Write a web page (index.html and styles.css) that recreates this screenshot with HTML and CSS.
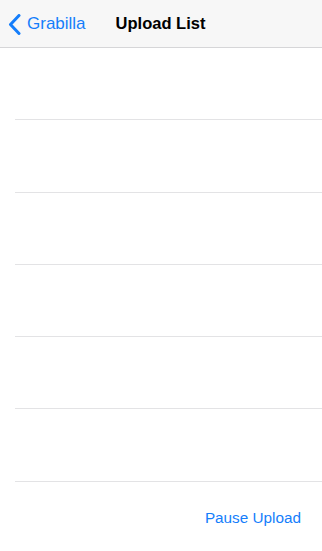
FILE: index.html
```html
<!DOCTYPE html>
<html lang="en">
<head>
  <meta charset="UTF-8">
  <title>Upload List</title>
  <meta name="viewport" content="width=device-width, initial-scale=1.0">
  <link rel="stylesheet" href="styles.css">
</head>
<body>
  <div class="navbar">
    <a class="back" href="#">
      <svg class="chevron" width="13" height="21" viewBox="0 0 13 21">
        <path d="M11 1.5 L2.5 10.5 L11 19.5" fill="none" stroke="#157efb" stroke-width="3" stroke-linecap="round" stroke-linejoin="round"/>
      </svg>
      <span>Grabilla</span>
    </a>
    <div class="title">Upload List</div>
  </div>

  <ul class="upload-list">
    <li class="row"></li>
    <li class="row"></li>
    <li class="row"></li>
    <li class="row"></li>
    <li class="row"></li>
    <li class="row"></li>
  </ul>

  <div class="footer">
    <a class="pause" href="#">Pause Upload</a>
  </div>
</body>
</html>
```

FILE: styles.css
```css
body { margin: 0; background: #fff; font-family: "Liberation Sans", Arial, sans-serif; }
a { text-decoration: none; }

.navbar { height: 47px; background: #f7f7f7; border-bottom: 1px solid #d6d6d8; display: flex; align-items: center; }
.back { display: flex; align-items: center; color: #157efb; font-size: 17px; padding-left: 8px; }
.back .chevron { margin-right: 6px; margin-top: 1px; }
.title { margin-left: 30px; font-size: 16.5px; font-weight: bold; color: #000; }

.upload-list { list-style: none; margin: 0; padding: 0 0 0 15px; }
.row { height: 72.3px; box-sizing: border-box; border-bottom: 1px solid #e3e3e5; }

.footer { display: flex; justify-content: flex-end; padding: 27px 21px 0 0; }
.pause { color: #157efb; font-size: 15.3px; }
```
